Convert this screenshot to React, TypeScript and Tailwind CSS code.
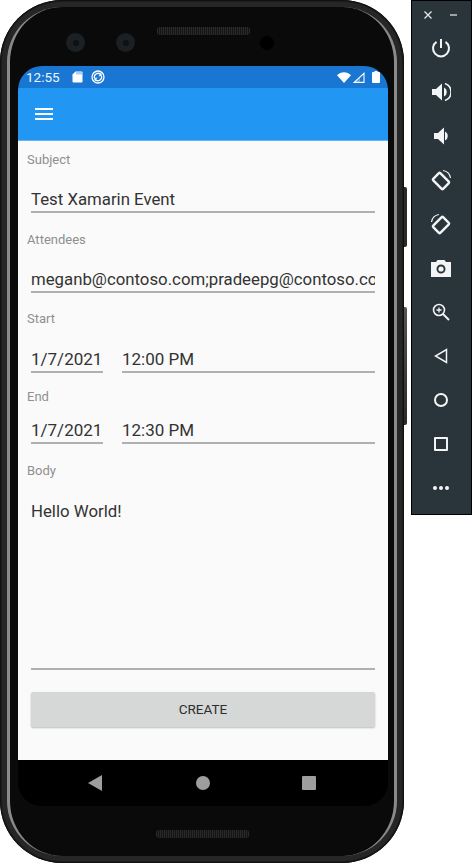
const roboto = "font-['Roboto',sans-serif]";
const label = "h-[20px] pl-[9px] text-[13px] leading-[20px] text-[#8f8f8f]";
const underline = "border-b-2 border-[#b0b0b0] pb-[1px]";

function Field({ name, value }: { name: string; value: string }) {
  return (
    <div>
      <div className={label}>{name}</div>
      <div className={`mx-[13px] flex h-[43px] items-end overflow-hidden whitespace-nowrap text-[16.8px] leading-[22px] text-[#333333] ${underline}`}>
        {value}
      </div>
    </div>
  );
}

function DateRow({ date, time, rowH }: { date: string; time: string; rowH: string }) {
  return (
    <div className={`${rowH} mx-[13px] flex gap-[19px] text-[17px] leading-[22px] text-[#333333]`}>
      <div className={`flex w-[72px] items-end whitespace-nowrap ${underline}`}>{date}</div>
      <div className={`flex flex-1 items-end ${underline}`}>{time}</div>
    </div>
  );
}

function Speaker() {
  return <div className="h-[8px] w-[93px] rounded-[3px] bg-[repeating-linear-gradient(90deg,#2a2a2a_0,#2a2a2a_1px,#141414_1px,#141414_2px)]" />;
}

function Lens() {
  return (
    <div className="flex h-[19px] w-[19px] items-center justify-center rounded-full bg-[#1a2024]">
      <div className="h-[6px] w-[6px] rounded-full bg-[#0e1113]" />
    </div>
  );
}

function StatusBar() {
  return (
    <div className="flex h-[22px] items-center bg-[#1976d2] px-[8px] text-white">
      <span className="text-[13.5px] leading-[22px] text-[#eef5fc]">12:55</span>
      <svg className="ml-[12px]" width="11" height="12" viewBox="0 0 11 12" fill="#fff">
        <path d="M3.5 0.5H9.5a1 1 0 0 1 1 1v9a1 1 0 0 1-1 1h-8a1 1 0 0 1-1-1V3.5z" />
        <path d="M5 1v2.5M7 1v2.5M9 1v2.5" stroke="#1976d2" strokeWidth="0.7" />
      </svg>
      <svg className="ml-[8px]" width="14" height="14" viewBox="0 0 14 14" fill="none" stroke="#fff">
        <circle cx="7" cy="7" r="6" strokeWidth="1.3" />
        <path d="M3.6 8.2A3.6 3.6 0 0 1 9.4 4.3" strokeWidth="1.3" />
        <path d="M10.4 5.8A3.6 3.6 0 0 1 4.6 9.7" strokeWidth="1.3" />
        <path d="M7.5 6.5l3.5-1-1-3z" fill="#fff" stroke="none" />
        <path d="M6.5 7.5L3 8.5l1 3z" fill="#fff" stroke="none" />
      </svg>
      <svg className="ml-auto" width="14" height="11" viewBox="0 0 14 11" fill="#fff">
        <path d="M0 3.2C3.8-.9 10.2-.9 14 3.2L7 11z" />
      </svg>
      <svg className="ml-[2px]" width="12" height="11" viewBox="0 0 12 11" fill="none" stroke="#fff" strokeWidth="1.1">
        <path d="M11 1.3V10.4H1.3z" />
        <path d="M7 5.5V10.4H2.5z" fill="#fff" fillOpacity="0.3" stroke="none" />
      </svg>
      <svg className="ml-[7px]" width="8" height="12" viewBox="0 0 8 12" fill="#fff">
        <path d="M2.5 0h3v1H7a1 1 0 0 1 1 1v9a1 1 0 0 1-1 1H1a1 1 0 0 1-1-1V2a1 1 0 0 1 1-1h1.5z" />
      </svg>
    </div>
  );
}

function Screen() {
  return (
    <div className={`flex h-[740px] w-[370px] flex-col overflow-hidden rounded-[24px] bg-black ${roboto}`}>
      <StatusBar />
      <div className="flex h-[52px] items-center bg-[#2196f3] pl-[17px]">
        <div className="flex h-[12px] w-[18px] flex-col justify-between">
          <div className="h-[2px] bg-white" />
          <div className="h-[2px] bg-white" />
          <div className="h-[2px] bg-white" />
        </div>
      </div>
      <div className="flex h-[620px] flex-col border-t border-[#64b5f6] bg-[#fafafa] pt-[9px]">
        <Field name="Subject" value="Test Xamarin Event" />
        <div className="h-[17px]" />
        <Field name="Attendees" value="meganb@contoso.com;pradeepg@contoso.com" />
        <div className="h-[16px]" />
        <div className={label}>Start</div>
        <DateRow date="1/7/2021" time="12:00 PM" rowH="h-[44px]" />
        <div className="h-[14px]" />
        <div className={label}>End</div>
        <DateRow date="1/7/2021" time="12:30 PM" rowH="h-[37px]" />
        <div className="h-[17px]" />
        <div className={label}>Body</div>
        <div className="mx-[13px] h-[189px] border-b-2 border-[#b0b0b0] pt-[19px] text-[16.8px] leading-[22px] text-[#333333]">
          Hello World!
        </div>
        <button className="mx-[13px] mt-[22px] h-[35px] rounded-[2px] bg-[#d6d7d7] text-[13.5px] text-[#2e2e2e] shadow-[0_1px_2px_rgba(0,0,0,0.25)]">
          CREATE
        </button>
      </div>
      <div className="flex h-[46px] items-center bg-black">
        <svg className="ml-[70px]" width="14" height="16" viewBox="0 0 14 16" fill="#9e9e9e">
          <path d="M14 0V16L0 8z" />
        </svg>
        <div className="ml-[94px] h-[14px] w-[14px] rounded-full bg-[#9e9e9e]" />
        <div className="ml-[92px] h-[14px] w-[14px] rounded-[1px] bg-[#9e9e9e]" />
      </div>
    </div>
  );
}

function Phone() {
  return (
    <div className="relative h-[863px] w-[404px] shrink-0">
      {/* side buttons */}
      <div className="absolute left-[402px] top-[187px] h-[60px] w-[5px] rounded-r-[2px] bg-[#2a2a2a]" />
      <div className="absolute left-[402px] top-[307px] h-[118px] w-[5px] rounded-r-[2px] bg-gradient-to-b from-[#555] to-[#2a2a2a]" />
      <div className="relative h-full w-full rounded-[62px] bg-[#1c1c1c] p-[2px] shadow-[inset_0_0_0_1px_#111]">
        <div className="h-full w-full rounded-[60px] bg-[#262626] p-[5px]">
          <div className="h-full w-full rounded-[55px] border-x-[3px] border-x-[#8a8a8a] bg-[#0a0a0a]">
            <div className="flex h-[59px] flex-col">
              <div className="mx-auto mt-[20px] flex w-[300px] justify-center pl-[2px]">
                <Speaker />
              </div>
              <div className="mt-[-2px] flex items-center pl-[56px]">
                <Lens />
                <div className="ml-[31px]">
                  <Lens />
                </div>
                <div className="ml-[125px] h-[14px] w-[14px] rounded-full bg-black" />
              </div>
            </div>
            <div className="ml-[8px]">
              <Screen />
            </div>
            <div className="mt-[24px] flex justify-center pl-[1px]">
              <Speaker />
            </div>
          </div>
        </div>
      </div>
    </div>
  );
}

function ToolButton({ children }: { children: React.ReactNode }) {
  return <div className="flex h-[44px] items-center justify-center">{children}</div>;
}

function Toolbar() {
  return (
    <div className="ml-[7px] h-[515px] w-[61px] shrink-0 border border-black bg-[#29353b]">
      <div className="flex h-[24px] items-center justify-between pl-[11px] pr-[14px] pt-[4px]">
        <svg width="10" height="10" viewBox="0 0 10 10" stroke="#e5e8e9" strokeWidth="1.3">
          <path d="M1.5 1.5l7 7M8.5 1.5l-7 7" />
        </svg>
        <div className="h-[1.5px] w-[7px] bg-[#9aa3a7]" />
      </div>
      <div className="flex flex-col pr-[2px] pt-[1px]">
        <ToolButton>
          <svg width="20" height="20" viewBox="0 0 20 20" fill="none" stroke="#f2f4f5" strokeWidth="2">
            <path d="M10 1v9" />
            <path d="M5.5 3.8a8 8 0 1 0 9 0" />
          </svg>
        </ToolButton>
        <ToolButton>
          <svg width="20" height="20" viewBox="0 0 20 20" fill="#f2f4f5">
            <path d="M1 7h4l6-5.5v17L5 13H1z" />
            <path d="M13 5.5a5 5 0 0 1 0 9z" />
            <path d="M14 1.5a9 9 0 0 1 0 17" fill="none" stroke="#f2f4f5" strokeWidth="1.6" />
          </svg>
        </ToolButton>
        <ToolButton>
          <svg width="16" height="18" viewBox="0 0 16 18" fill="#f2f4f5">
            <path d="M1 6h4l6-5.5v17L5 12H1z" />
            <path d="M12 4.5a5 5 0 0 1 0 9z" />
          </svg>
        </ToolButton>
        <ToolButton>
          <svg width="24" height="24" viewBox="0 0 24 24" fill="none" stroke="#f2f4f5">
            <rect x="7" y="6" width="10" height="14" rx="1" strokeWidth="2.4" transform="rotate(-45 12 13)" />
            <path d="M14 2.5a9 9 0 0 1 7.5 7.5" strokeWidth="1.2" />
          </svg>
        </ToolButton>
        <ToolButton>
          <svg width="24" height="24" viewBox="0 0 24 24" fill="none" stroke="#f2f4f5">
            <rect x="7" y="6" width="10" height="14" rx="1" strokeWidth="2.4" transform="rotate(45 12 13)" />
            <path d="M10 2.5a9 9 0 0 0-7.5 7.5" strokeWidth="1.2" />
          </svg>
        </ToolButton>
        <ToolButton>
          <svg width="20" height="18" viewBox="0 0 20 18" fill="#f2f4f5">
            <path fillRule="evenodd" d="M6.5 1h7L15 3h5v15H0V3h5zM10 5.5a4.5 4.5 0 1 0 0 9 4.5 4.5 0 0 0 0-9z" />
            <circle cx="10" cy="10" r="2.6" />
          </svg>
        </ToolButton>
        <ToolButton>
          <svg width="18" height="18" viewBox="0 0 18 18" fill="none" stroke="#f2f4f5" strokeWidth="1.6">
            <circle cx="7" cy="7" r="5.5" />
            <path d="M11 11l6 6" strokeWidth="2" />
            <path d="M4.5 7h5M7 4.5v5" strokeWidth="1.3" />
          </svg>
        </ToolButton>
        <ToolButton>
          <svg width="14" height="16" viewBox="0 0 14 16" fill="none" stroke="#f2f4f5" strokeWidth="1.5">
            <path d="M12.5 1.5v13L1.5 8z" />
          </svg>
        </ToolButton>
        <ToolButton>
          <div className="h-[14px] w-[14px] rounded-full border-2 border-[#f2f4f5]" />
        </ToolButton>
        <ToolButton>
          <div className="h-[14px] w-[14px] rounded-[1px] border-2 border-[#f2f4f5]" />
        </ToolButton>
        <ToolButton>
          <div className="flex gap-[2px]">
            <div className="h-[4px] w-[4px] rounded-full bg-[#f2f4f5]" />
            <div className="h-[4px] w-[4px] rounded-full bg-[#f2f4f5]" />
            <div className="h-[4px] w-[4px] rounded-full bg-[#f2f4f5]" />
          </div>
        </ToolButton>
      </div>
    </div>
  );
}

export default function App() {
  return (
    <div className="flex h-[864px] w-[472px] items-start overflow-hidden bg-white">
      <Phone />
      <Toolbar />
    </div>
  );
}
